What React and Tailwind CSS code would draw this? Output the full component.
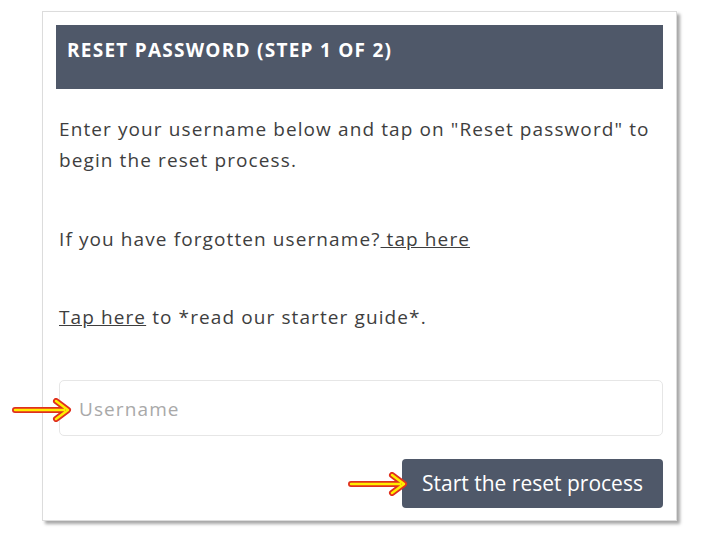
export default function App() {
  const Arrow = ({ className }) => (
    <svg className={className} width="62" height="24" viewBox="0 0 62 24">
      <path d="M3 12 H52 M44 3 L56 12 L44 21" fill="none" stroke="#e0301e" strokeWidth="6" strokeLinecap="round" strokeLinejoin="round" />
      <path d="M3 12 H52 M44 3 L56 12 L44 21" fill="none" stroke="#ffee00" strokeWidth="2.5" strokeLinecap="round" strokeLinejoin="round" />
    </svg>
  );
  return (
    <div className="relative w-[726px] h-[537px] bg-white pl-[42px] pt-[11px]" style={{ fontFamily: '"Open Sans", "Noto Sans", sans-serif' }}>
      <div className="w-[635px] h-[510px] bg-white border border-[#dcdcdc] shadow-[3px_3px_3px_rgba(0,0,0,0.35)] pt-[13px] pl-[13px]">
        <div className="w-[607px] h-[64px] bg-[#4f5869] flex items-start pt-[11px] pl-[11px]">
          <span className="text-white font-bold text-[19px] leading-[28px] tracking-[1.25px]">RESET PASSWORD (STEP 1 OF 2)</span>
        </div>
        <div className="pl-[3px] text-[#3e3e3e] text-[19px] leading-[31px] tracking-[1.1px]">
          <p className="mt-[25px] w-[604px]">Enter your username below and tap on "Reset password" to begin the reset process.</p>
          <p className="mt-[48px]">If you have forgotten username?<span className="underline"> tap here</span></p>
          <p className="mt-[47px]">
            <span className="underline">Tap here</span> to *read our starter guide*.
          </p>
          <div className="mt-[47px] w-[604px] h-[56px] border border-[#e6e6e6] rounded-[5px] flex items-center pl-[19px] pt-[2px] text-[#a9a9a9]">
            Username
          </div>
          <div className="w-[604px] flex justify-end mt-[23px] tracking-normal">
            <div className="w-[261px] h-[49px] bg-[#4f5869] rounded-[4px] flex items-center justify-center text-white text-[21px]">
              Start the reset process
            </div>
          </div>
        </div>
      </div>
      <Arrow className="absolute left-[12px] top-[398px]" />
      <Arrow className="absolute left-[348px] top-[472px]" />
    </div>
  );
}
